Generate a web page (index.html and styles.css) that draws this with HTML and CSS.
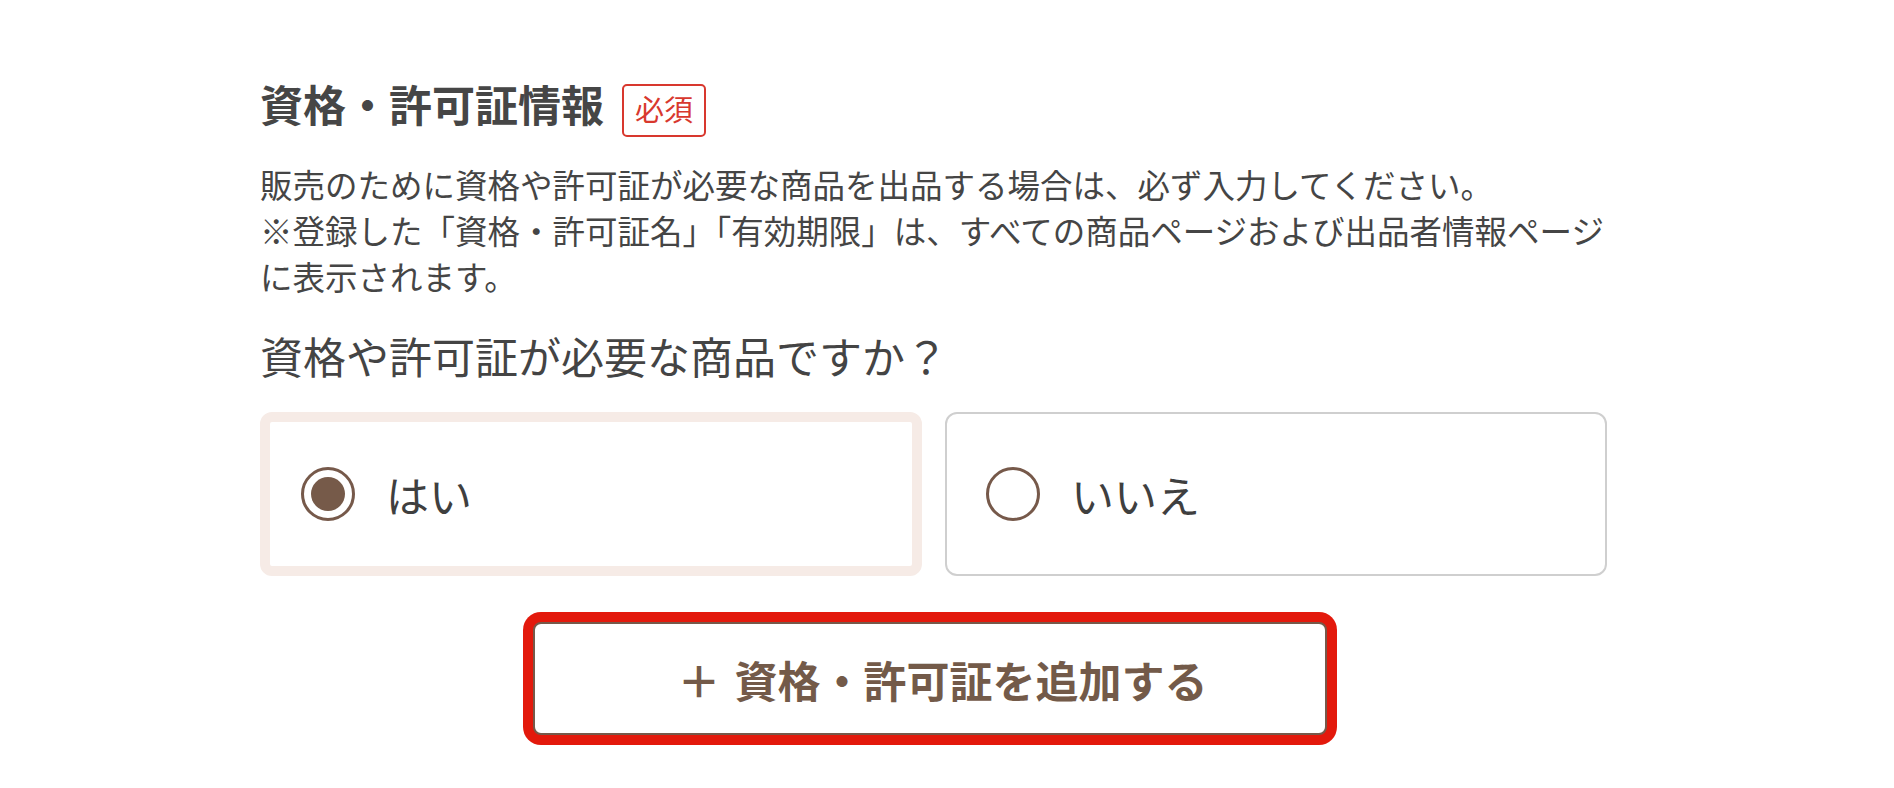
FILE: index.html
```html
<!DOCTYPE html>
<html lang="ja">
<head>
<meta charset="utf-8">
<title>資格・許可証情報</title>
<link rel="stylesheet" href="styles.css">
</head>
<body>
<div class="page">
  <section class="field">
    <div class="head">
      <h2 class="title">資格・許可証情報</h2>
      <span class="badge">必須</span>
    </div>
    <p class="desc first">販売のために資格や許可証が必要な商品を出品する場合は、必ず入力してください。</p>
    <p class="desc">※登録した「資格・許可証名」「有効期限」は、すべての商品ページおよび出品者情報ページに表示されます。</p>
    <p class="question">資格や許可証が必要な商品ですか？</p>
    <div class="options">
      <label class="option is-selected">
        <span class="radio is-checked"></span>
        <span class="option-label">はい</span>
      </label>
      <label class="option">
        <span class="radio"></span>
        <span class="option-label">いいえ</span>
      </label>
    </div>
    <div class="actions">
      <button class="add-btn" type="button"><span class="plus">＋</span>資格・許可証を追加する</button>
    </div>
  </section>
</div>
</body>
</html>
```

FILE: styles.css
```css
* {
  box-sizing: border-box;
  margin: 0;
  padding: 0;
}

body {
  margin: 0;
  background: #ffffff;
  font-family: "Noto Sans CJK JP", "Noto Sans", sans-serif;
  color: #444444;
}

.page {
  padding: 84px 287px 50px 260px;
}

.head {
  display: flex;
  align-items: center;
  height: 53px;
}

.title {
  font-size: 43px;
  font-weight: 700;
  line-height: 1;
  color: #464646;
  margin-bottom: 14px;
}

.badge {
  margin-left: 18px;
  height: 53px;
  border: 2px solid #d8382e;
  border-radius: 5px;
  color: #d8382e;
  font-size: 29px;
  line-height: 45px;
  padding: 0 11px 4px;
}

.desc {
  font-size: 32.5px;
  line-height: 46px;
  color: #454545;
}

.desc.first {
  margin-top: 24px;
}

.question {
  margin-top: 26px;
  font-size: 43px;
  line-height: 60px;
  color: #444444;
}

.options {
  margin-top: 27px;
  display: grid;
  grid-template-columns: 1fr 1fr;
  gap: 23px;
}

.option {
  height: 164px;
  display: flex;
  align-items: center;
  border: 2px solid #cfcfcf;
  border-radius: 12px;
  padding-left: 39px;
  background: #ffffff;
}

.option.is-selected {
  border: 10px solid #f6ebe6;
  padding-left: 31px;
}

.radio {
  width: 54px;
  height: 54px;
  border: 3px solid #76594a;
  border-radius: 50%;
  display: flex;
  align-items: center;
  justify-content: center;
  flex: none;
}

.radio.is-checked::after {
  content: "";
  width: 34px;
  height: 34px;
  border-radius: 50%;
  background: #765a49;
}

.option-label {
  margin-left: 31px;
  font-size: 43px;
  line-height: 60px;
  color: #3f3f3f;
}

.actions {
  margin-top: 46px;
  display: flex;
  justify-content: center;
}

.add-btn {
  width: 794px;
  height: 113px;
  margin-right: 8px;
  border: 2px solid #76594a;
  border-radius: 8px;
  background: #ffffff;
  box-shadow: 0 0 0 10px #e3190c;
  display: flex;
  align-items: center;
  justify-content: center;
  padding-left: 26px;
  font-family: "Noto Sans CJK JP", "Noto Sans", sans-serif;
  font-size: 43px;
  font-weight: 700;
  color: #735a49;
  cursor: pointer;
}

.plus {
  margin-right: 14px;
}
```
